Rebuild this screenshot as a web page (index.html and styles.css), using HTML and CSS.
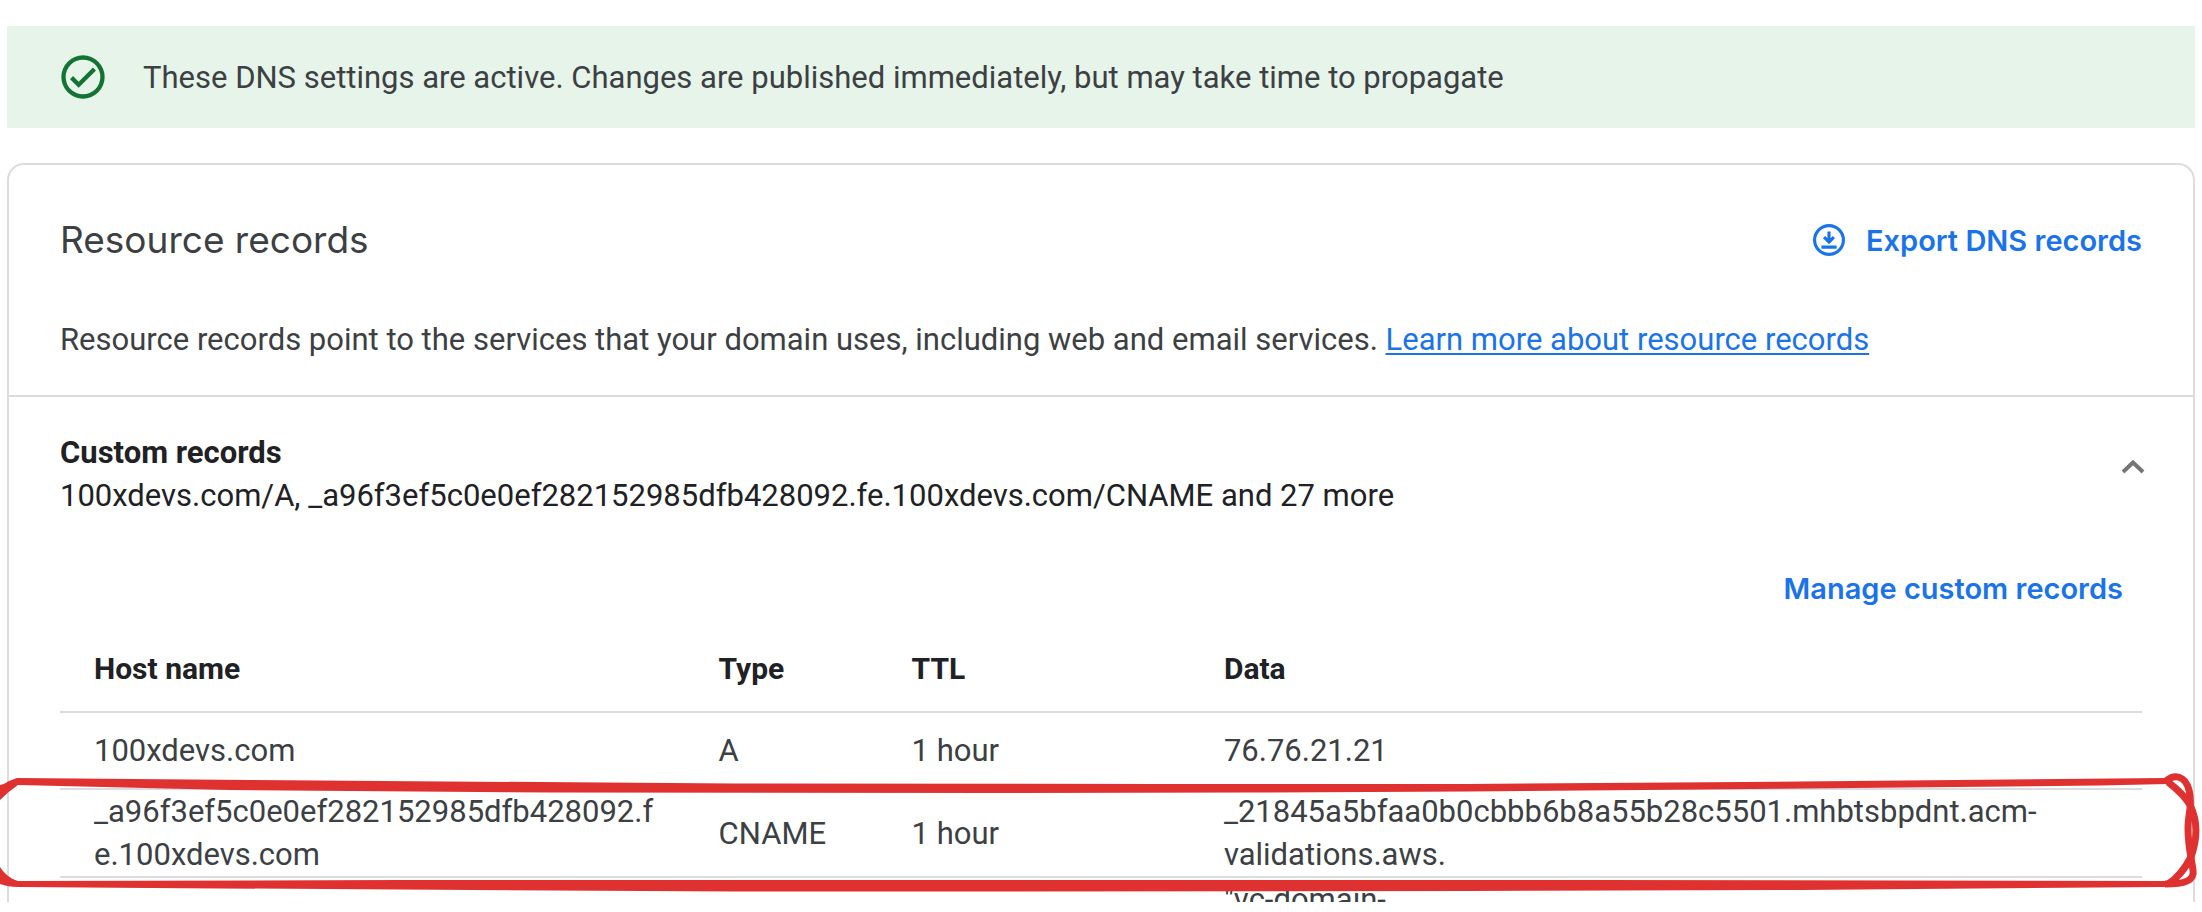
FILE: index.html
```html
<!DOCTYPE html>
<html lang="en">
<head>
<meta charset="utf-8">
<title>DNS resource records</title>
<link rel="stylesheet" href="styles.css">
</head>
<body>
<main class="page">
  <div class="banner" role="status">
    <svg class="banner-icon" viewBox="0 0 24 24" aria-hidden="true"><path d="M16.59 7.58 10 14.17l-2.59-2.58L6 13l4 4 8-8zM12 2a10 10 0 1 0 0 20 10 10 0 0 0 0-20zm0 18a8 8 0 1 1 0-16 8 8 0 0 1 0 16z"/></svg>
    <p class="banner-text">These DNS settings are active. Changes are published immediately, but may take time to propagate</p>
  </div>

  <section class="card">
    <header class="card-head">
      <div class="title-row">
        <h1 class="title">Resource records</h1>
        <button class="text-button" type="button">
          <svg class="export-icon" viewBox="0 0 24 24" aria-hidden="true"><circle cx="12" cy="12" r="9.1"/><path d="M12 6.6v5.6M8.9 10.2l3.1 3.1 3.1-3.1M7.2 16.5h9.6"/></svg>
          Export DNS records
        </button>
      </div>
      <p class="intro">Resource records point to the services that your domain uses, including web and email services. <a class="link" href="#">Learn more about resource records</a></p>
    </header>

    <div class="summary">
      <div>
        <h2 class="summary-title">Custom records</h2>
        <p class="summary-text">100xdevs.com/A, _a96f3ef5c0e0ef282152985dfb428092.fe.100xdevs.com/CNAME and 27 more</p>
      </div>
      <button class="toggle" type="button" aria-label="Collapse custom records" aria-expanded="true">
        <svg class="chevron" viewBox="0 0 24 14" aria-hidden="true"><path d="M2 12 12 2.5 22 12"/></svg>
      </button>
    </div>

    <div class="actions"><button class="text-button" type="button">Manage custom records</button></div>

    <table class="records">
      <thead>
        <tr><th class="col-host">Host name</th><th class="col-type">Type</th><th class="col-ttl">TTL</th><th>Data</th></tr>
      </thead>
      <tbody>
        <tr><td>100xdevs.com</td><td>A</td><td>1 hour</td><td>76.76.21.21</td></tr>
        <tr><td>_a96f3ef5c0e0ef282152985dfb428092.f<wbr>e.100xdevs.com</td><td>CNAME</td><td>1 hour</td><td>_21845a5bfaa0b0cbbb6b8a55b28c5501.mhbtsbpdnt.acm-validations.aws.</td></tr>
        <tr class="row-top"><td></td><td></td><td></td><td>"vc-domain-</td></tr>
      </tbody>
    </table>
  </section>

  <svg class="marker" viewBox="0 770 2202 130" preserveAspectRatio="none" aria-hidden="true">
    <g class="marker-fill">
      <path d="M17 778 250 780 734 783.5 1160 784H1468L1800 781.5 2165 778 2169 784 2100 785.5 1700 789.5 1468 791.5 1250 792.5 1000 793 550 792.5 230 790 18 785Q9 791 0 800V785Q5 784 9 781Z"/>
      <path d="M0 867C4 873 10 879 18 881L400 880H1600L2165 881V887L1800 890 1468 891 1000 891.5H734L150 888 18 887Q8 887 0 884Z"/>
    </g>
    <g class="marker-line">
      <path d="M2166 781C2174 774 2185 775 2189 790C2193 806 2188 813 2188 828C2188 846 2191 856 2193 870C2195 881 2184 884 2165 884"/>
      <path d="M2168 782C2178 790 2185 796 2190 805C2198 821 2197 840 2191 857C2184 870 2178 878 2168 884"/>
    </g>
  </svg>
</main>
</body>
</html>
```

FILE: styles.css
```css
* {
  box-sizing: border-box;
}

body {
  margin: 0;
  background: #fff;
  color: #3c4043;
  font-family: Roboto, "Liberation Sans", sans-serif;
  font-size: 31px;
  line-height: 43px;
}

h1, h2, p {
  margin: 0;
}

button {
  border: 0;
  padding: 0;
  background: none;
  font: inherit;
  cursor: pointer;
}

.page {
  position: relative;
  display: flex;
  flex-direction: column;
  gap: 35px;
  height: 100vh;
  padding: 26px 7px 10px;
  overflow: hidden;
}

.banner {
  display: flex;
  flex-shrink: 0;
  align-items: center;
  gap: 34px;
  padding: 25px 50px;
  background: #e6f4ea;
}

.banner-icon {
  width: 52px;
  height: 52px;
  fill: #137333;
}

.card {
  flex: 1;
  min-height: 0;
  overflow: hidden;
  border: 2px solid #dadce0;
  border-bottom: 0;
  border-radius: 17px 17px 0 0;
}

.card-head {
  padding: 48px 51px 34px;
  border-bottom: 2px solid #dadce0;
}

.title-row {
  display: flex;
  align-items: center;
  justify-content: space-between;
  margin-bottom: 51px;
}

.title {
  font-family: Inter, Roboto, sans-serif;
  font-size: 37px;
  font-weight: 400;
  line-height: 54px;
}

.text-button {
  display: flex;
  align-items: center;
  gap: 18px;
  color: #1a73e8;
  font-family: Inter, Roboto, sans-serif;
  font-size: 29px;
  font-weight: 600;
}

.export-icon {
  width: 38px;
  height: 38px;
  fill: none;
  stroke: currentColor;
  stroke-width: 2;
}

.link {
  color: #1a73e8;
  text-decoration-thickness: 2px;
  text-underline-offset: 3px;
}

.summary {
  display: flex;
  align-items: flex-start;
  justify-content: space-between;
  padding: 34px 48px 0 51px;
  color: #202124;
}

.summary-title {
  font-size: 31px;
  font-weight: 700;
}

.toggle {
  display: flex;
  padding-top: 29px;
}

.chevron {
  width: 24px;
  height: 14px;
  fill: none;
  stroke: #757575;
  stroke-width: 4;
}

.actions {
  display: flex;
  justify-content: flex-end;
  padding: 50px 70px 0 51px;
}

.records {
  width: calc(100% - 102px);
  margin: 16px 51px 0;
  border-collapse: collapse;
  table-layout: fixed;
  text-align: left;
}

.records th,
.records td {
  height: 77px;
  padding: 0 34px;
  border-bottom: 2px solid #dadce0;
}

.records th {
  height: 86px;
  color: #202124;
  font-size: 30px;
  font-weight: 700;
}

.records .col-host {
  width: 30%;
}

.records .col-type {
  width: 193px;
  padding-right: 0;
}

.records .col-ttl {
  width: 15%;
}

.records .row-top td {
  vertical-align: top;
}

.marker {
  position: absolute;
  top: 770px;
  left: 0;
  width: 100%;
  height: 130px;
}

.marker-fill {
  fill: #e03131;
}

.marker-line {
  fill: none;
  stroke: #e03131;
  stroke-width: 7;
}
```
